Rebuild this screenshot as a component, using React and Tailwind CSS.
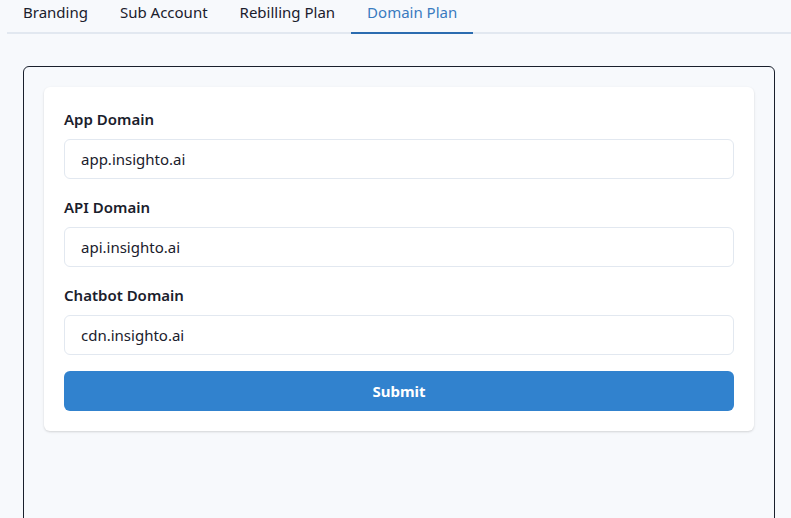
import React, { useState } from "react";

const tabs = ["Branding", "Sub Account", "Rebilling Plan", "Domain Plan"];

const fields = [
  { label: "App Domain", value: "app.insighto.ai" },
  { label: "API Domain", value: "api.insighto.ai" },
  { label: "Chatbot Domain", value: "cdn.insighto.ai" },
];

const App = () => {
  const [active, setActive] = useState(3);
  const [values, setValues] = useState(fields.map((f) => f.value));

  return (
    <div
      className="min-h-screen w-full bg-[#f7f9fc] pl-[7px] text-[#1a202c]"
      style={{ fontFamily: '"Noto Sans", "Open Sans", sans-serif' }}
    >
      {/* Tabs */}
      <div className="flex border-b-2 border-[#e2e8f0]">
        {tabs.map((tab, index) => (
          <button
            key={tab}
            onClick={() => setActive(index)}
            className={`-mb-[2px] border-b-2 px-4 pt-0 pb-2 text-[15px] leading-6 ${
              active === index
                ? "border-[#2b6cb0] text-[#3a7bc0]"
                : "border-transparent text-[#1a202c]"
            }`}
          >
            {tab}
          </button>
        ))}
      </div>

      {/* Panel */}
      <div className="px-4 pt-8">
        <div className="h-[460px] rounded-md border border-[#1a202c] px-5 pt-5">
          <div className="flex flex-col gap-4 rounded-md bg-white p-5 shadow-[0_1px_3px_rgba(0,0,0,0.1),0_1px_2px_rgba(0,0,0,0.06)]">
            {fields.map((field, index) => (
              <div key={field.label} className="flex flex-col gap-2">
                <label className="text-[15px] font-semibold leading-6">
                  {field.label}
                </label>
                <input
                  value={values[index]}
                  onChange={(e) => {
                    const next = [...values];
                    next[index] = e.target.value;
                    setValues(next);
                  }}
                  className="h-10 rounded-md border border-[#e2e8f0] bg-white px-4 text-[15px] text-[#1a202c] outline-none"
                />
              </div>
            ))}
            <button className="h-10 rounded-md bg-[#3182ce] text-[15px] font-bold text-white">
              Submit
            </button>
          </div>
        </div>
      </div>
    </div>
  );
};

export default App;
